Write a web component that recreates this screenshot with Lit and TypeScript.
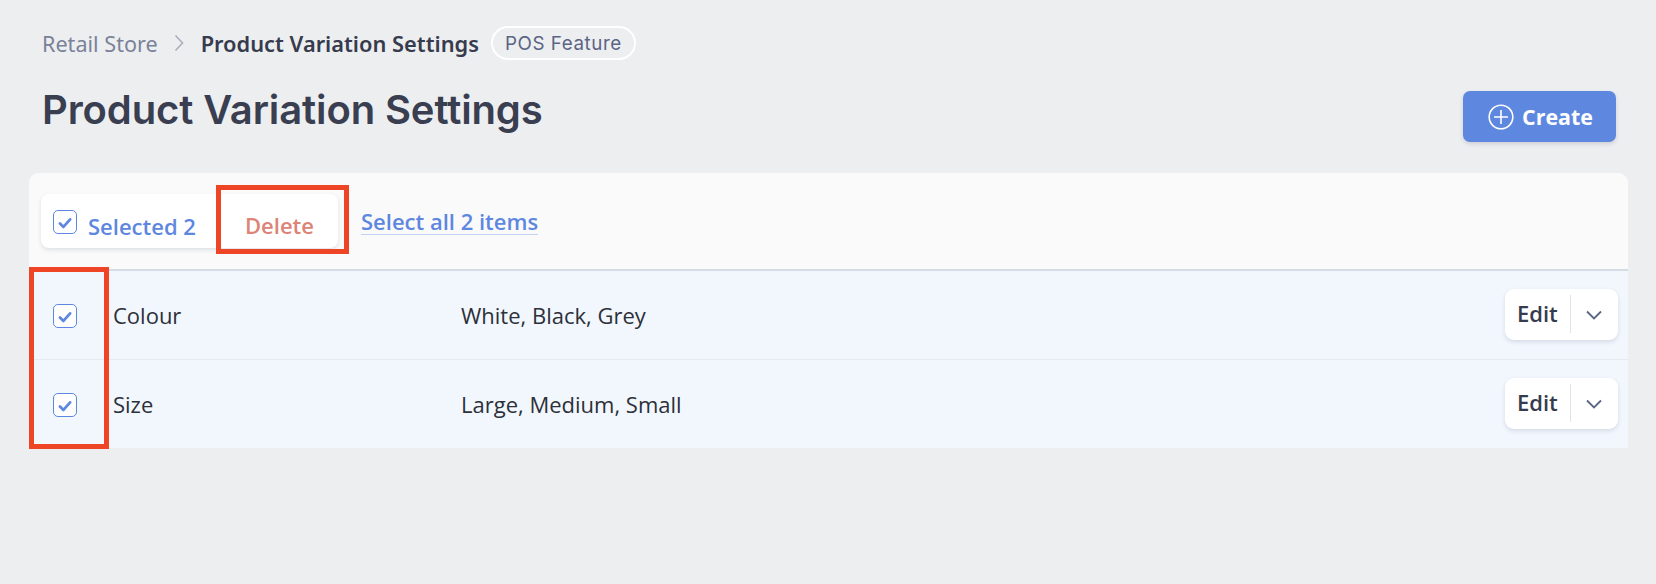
import { LitElement, html, css } from "lit";
import { customElement } from "lit/decorators.js";

const check = html`<span class="cb"><svg viewBox="0 0 24 24" width="24" height="24"><path d="M6.5 12.5l3.8 3.8L17.6 8" fill="none" stroke="#5e87e0" stroke-width="3" stroke-linecap="round" stroke-linejoin="round"/></svg></span>`;

const row = (name: string, vals: string) => html`
  <div class="row">
    <div class="cell-check">${check}</div>
    <div class="name">${name}</div>
    <div class="vals">${vals}</div>
    <div class="split">
      <span class="edit">Edit</span><span class="sep"></span>
      <span class="chev"><svg viewBox="0 0 16 10" width="16" height="10"><path d="M1 1.5l7 7 7-7" fill="none" stroke="#5a6484" stroke-width="1.8"/></svg></span>
    </div>
  </div>`;

@customElement("app-root")
export class AppRoot extends LitElement {
  static styles = css`
    :host { display: block; width: 1656px; height: 584px; background: #edeef0; position: relative; overflow: hidden; font-family: "Open Sans", sans-serif; color: #2d3038; }
    .crumbs { display: flex; align-items: center; padding: 25px 0 0 42px; height: 36px; font-family: "Noto Sans", sans-serif; font-size: 21.6px; }
    .c1 { color: #7a8299; }
    .arrow { margin: 0 17px 0 16px; display: flex; }
    .c2 { color: #363b4d; font-weight: 600; font-size: 21.8px; }
    .pill { margin-left: 12px; height: 30px; padding: 0 12px; border: 2px solid #fff; border-radius: 17px; display: flex; align-items: center; font-family: Inter, sans-serif; font-size: 18.8px; color: #5a6484; letter-spacing: .55px; }
    .head { display: flex; justify-content: space-between; padding: 0 40px 0 42px; height: 112px; }
    h1 { margin: 0; padding-top: 20px; font-family: Inter, sans-serif; font-weight: 600; font-size: 40px; line-height: 58px; color: #393e50; letter-spacing: -.12px; }
    .create { margin-top: 30px; width: 153px; height: 51px; box-sizing: border-box; background: #5e87e0; border-radius: 7px; box-shadow: 0 2px 4px rgba(60,70,100,.18); color: #fff; font-weight: 700; font-size: 21.4px; display: flex; align-items: center; justify-content: center; gap: 8px; padding-left: 2px; }
    .card { margin: 0 28px 0 29px; background: #f2f7fe; border-radius: 10px 10px 0 0; overflow: hidden; }
    .bar { height: 96px; background: #fafafa; border-bottom: 2px solid #d5dce6; display: flex; align-items: center; padding-left: 12px; }
    .group { width: 297px; height: 54px; background: #fff; border-radius: 8px; box-shadow: 0 2px 4px rgba(60,70,100,.14); display: flex; }
    .sel { display: flex; align-items: center; gap: 11px; padding-left: 12px; width: 168px; color: #5e87e0; font-weight: 600; font-size: 22px; }
    .sel .cb { position: relative; top: 1px; }
    .sel span.t { position: relative; top: 5px; }
    .del { color: #dd8377; font-weight: 600; font-size: 22px; flex: 1; display: flex; align-items: center; justify-content: center; position: relative; top: 4px; }
    .all { margin-left: 23px; color: #5e87e0; font-weight: 600; font-size: 22px; line-height: 26px; border-bottom: 1px solid #c3d3f3; }
    .cb { width: 22px; height: 22px; border: 1px solid #5e87e0; border-radius: 5px; background: #fff; display: inline-flex; flex: none; }
    .row { height: 88px; display: flex; align-items: center; border-bottom: 1px solid #e6ebf2; font-size: 22px; color: #2d3038; }
    .row:last-child { border-bottom: 0; }
    .cell-check { width: 84px; padding-left: 24px; box-sizing: border-box; display: flex; position: relative; top: 1px; }
    .name { width: 348px; }
    .vals { flex: 1; }
    .split { width: 113px; height: 51px; margin: 0 10px 2px 0; background: #fff; border-radius: 9px; box-shadow: 0 2px 4px rgba(60,70,100,.16); display: flex; align-items: center; font-weight: 600; color: #363b4d; }
    .edit { width: 65px; padding: 0 0 2px 12px; box-sizing: border-box; font-size: 22px; }
    .sep { width: 1px; height: 38px; background: #e0e3ea; }
    .chev { flex: 1; display: flex; justify-content: center; margin-right: 2px; padding-top: 2px; }
    .mark { position: absolute; border: 5px solid #ee4526; box-sizing: border-box; }
    .m1 { left: 216px; top: 185px; width: 133px; height: 69px; }
    .m2 { left: 29px; top: 267px; width: 80px; height: 182px; }
  `;
  render() {
    return html`
      <div class="crumbs">
        <span class="c1">Retail Store</span>
        <span class="arrow"><svg viewBox="0 0 10 18" width="10" height="18"><path d="M1.5 1.5l7 7.5-7 7.5" fill="none" stroke="#a9afc0" stroke-width="1.6"/></svg></span>
        <span class="c2">Product Variation Settings</span>
        <span class="pill">POS Feature</span>
      </div>
      <div class="head">
        <h1>Product Variation Settings</h1>
        <div class="create">
          <svg viewBox="0 0 26 26" width="26" height="26"><circle cx="13" cy="13" r="11.8" fill="none" stroke="#fff" stroke-width="1.6"/><path d="M13 6v14M6 13h14" stroke="#fff" stroke-width="1.6"/></svg>
          Create
        </div>
      </div>
      <div class="card">
        <div class="bar">
          <div class="group">
            <div class="sel">${check}<span class="t">Selected 2</span></div>
            <div class="del">Delete</div>
          </div>
          <span class="all">Select all 2 items</span>
        </div>
        ${row("Colour", "White, Black, Grey")}
        ${row("Size", "Large, Medium, Small")}
      </div>
      <div class="mark m1"></div>
      <div class="mark m2"></div>
    `;
  }
}
